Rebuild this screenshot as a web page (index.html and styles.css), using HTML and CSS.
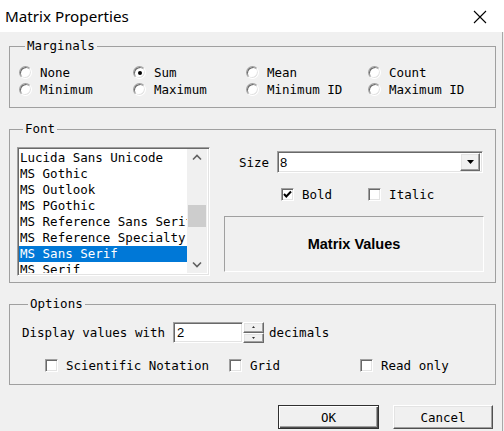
FILE: index.html
```html
<!DOCTYPE html>
<html>
<head>
<meta charset="utf-8">
<link rel="stylesheet" href="styles.css">
</head>
<body>
<div class="window">
  <div class="titlebar">
    <span class="title">Matrix Properties</span>
    <svg class="close" width="14" height="14" viewBox="0 0 14 14"><path d="M1 1L13 13M13 1L1 13" stroke="#000" stroke-width="1.1" fill="none"/></svg>
  </div>
  <div class="client">
    <fieldset class="group marginals">
      <legend>Marginals</legend>
      <div class="radio-grid">
        <div class="opt"><span class="radio"></span>None</div>
        <div class="opt"><span class="radio on"></span>Sum</div>
        <div class="opt"><span class="radio"></span>Mean</div>
        <div class="opt"><span class="radio"></span>Count</div>
        <div class="opt"><span class="radio"></span>Minimum</div>
        <div class="opt"><span class="radio"></span>Maximum</div>
        <div class="opt"><span class="radio"></span>Minimum ID</div>
        <div class="opt"><span class="radio"></span>Maximum ID</div>
      </div>
    </fieldset>

    <fieldset class="group font">
      <legend>Font</legend>
      <div class="font-body">
        <div class="listbox sunken">
          <div class="items">
            <div class="item">Lucida Sans Unicode</div>
            <div class="item">MS Gothic</div>
            <div class="item">MS Outlook</div>
            <div class="item">MS PGothic</div>
            <div class="item">MS Reference Sans Serif</div>
            <div class="item">MS Reference Specialty</div>
            <div class="item sel">MS Sans Serif</div>
            <div class="item">MS Serif</div>
          </div>
          <div class="scrollbar">
            <svg class="chev" width="20" height="17" viewBox="0 0 20 17"><path d="M6 10.5L10 6.5L14 10.5" stroke="#606060" stroke-width="1.6" fill="none"/></svg>
            <div class="track"><div class="thumb"></div></div>
            <svg class="chev" width="20" height="17" viewBox="0 0 20 17"><path d="M6 6.5L10 10.5L14 6.5" stroke="#606060" stroke-width="1.6" fill="none"/></svg>
          </div>
        </div>
        <div class="font-side">
          <div class="size-row">
            <span class="lbl">Size</span>
            <div class="combo sunken">
              <span class="val">8</span>
              <span class="dropbtn raised"><svg width="7" height="4" viewBox="0 0 7 4"><path d="M0 0H7L3.5 4Z" fill="#000"/></svg></span>
            </div>
          </div>
          <div class="style-row">
            <div class="chk-item"><span class="check sunken"><svg width="11" height="11" viewBox="0 0 11 11"><path d="M2 5L4.3 7.5L9 2.5" stroke="#000" stroke-width="2" fill="none"/></svg></span>Bold</div>
            <div class="chk-item italic-item"><span class="check sunken"></span>Italic</div>
          </div>
          <div class="preview">Matrix Values</div>
        </div>
      </div>
    </fieldset>

    <fieldset class="group options">
      <legend>Options</legend>
      <div class="dec-row">
        <span>Display values with</span>
        <div class="spin">
          <div class="edit sunken">2</div>
          <div class="spinbtns">
            <span class="sbtn raised"><svg width="3" height="2" viewBox="0 0 3 2"><path d="M0 2H3L1.5 0Z" fill="#303030"/></svg></span>
            <span class="sbtn raised"><svg width="3" height="2" viewBox="0 0 3 2"><path d="M0 0H3L1.5 2Z" fill="#303030"/></svg></span>
          </div>
        </div>
        <span>decimals</span>
      </div>
      <div class="opt-row">
        <div class="chk-item"><span class="check sunken"></span>Scientific Notation</div>
        <div class="chk-item"><span class="check sunken"></span>Grid</div>
        <div class="chk-item"><span class="check sunken"></span>Read only</div>
      </div>
    </fieldset>

    <div class="buttons">
      <div class="btn default">OK</div>
      <div class="btn">Cancel</div>
    </div>
  </div>
</div>
</body>
</html>
```
FILE: styles.css
```css
* { box-sizing: border-box; }
html, body { margin: 0; padding: 0; }
body {
  width: 504px;
  height: 431px;
  overflow: hidden;
  background: #f0f0f0;
  font-family: "DejaVu Sans Mono", monospace;
  font-size: 12.5px;
  color: #000;
}
.window { width: 504px; height: 431px; display: flex; flex-direction: column; }
.titlebar {
  height: 32px;
  flex: none;
  background: #fff;
  display: flex;
  align-items: center;
  justify-content: space-between;
  padding: 0 17px 1px 5px;
}
.title {
  font-family: "Noto Sans", sans-serif;
  font-size: 15.2px;
}
.close { margin-top: 2px; }
.client {
  flex: 1;
  margin-right: 1px;
  border-right: 1px solid #a8a8a8;
  padding: 6px 6px 0 9px;
  display: flex;
  flex-direction: column;
}

.group {
  margin: 0;
  border: 1px solid #a0a0a0;
  min-width: 0;
}
.group + .group { margin-top: 13px; }
.group legend {
  margin-left: 6px;
  padding: 0 2px;
  line-height: 16px;
  height: 16px;
}

.marginals { padding: 10px 4px 9px 9px; }
.radio-grid {
  display: grid;
  grid-template-columns: 114px 113px 122px 1fr;
  grid-auto-rows: 17px;
}
.opt { display: flex; align-items: center; gap: 8px; white-space: nowrap; line-height: 17px; }
.radio {
  width: 13px;
  height: 13px;
  border-radius: 50%;
  background: #fff;
  border: 1px solid;
  border-color: #a0a0a0 #fff #fff #a0a0a0;
  box-shadow: inset 1px 1px #696969, inset -1px -1px #e3e3e3;
  position: relative;
  flex: none;
}
.radio.on::after {
  content: "";
  position: absolute;
  left: 3.5px;
  top: 3.5px;
  width: 4px;
  height: 4px;
  border-radius: 50%;
  background: #000;
}

.sunken {
  border: 1px solid;
  border-color: #a0a0a0 #fff #fff #a0a0a0;
  box-shadow: inset 1px 1px #696969, inset -1px -1px #e3e3e3;
}
.raised {
  border: 1px solid;
  border-color: #fff #696969 #696969 #fff;
  box-shadow: inset -1px -1px #a0a0a0, inset 1px 1px #e3e3e3;
  background: #f0f0f0;
}

.font { padding: 10px 11px 6px 7px; }
.font-body { display: flex; gap: 14px; }
.listbox {
  width: 193px;
  height: 129px;
  background: #fff;
  padding: 1px 2px 2px 1px;
  display: flex;
  overflow: hidden;
}
.items { flex: 1; min-width: 0; overflow: hidden; padding-top: 1px; }
.item {
  height: 16px;
  line-height: 16px;
  white-space: nowrap;
  overflow: hidden;
  padding-left: 1px;
}
.item.sel { background: #0078d7; color: #fff; }
.scrollbar {
  width: 20px;
  flex: none;
  background: #f0f0f0;
  display: flex;
  flex-direction: column;
}
.chev { display: block; flex: none; }
.track { flex: 1; padding-top: 39px; }
.thumb { height: 22px; margin: 0 1px; background: #cdcdcd; }

.font-side { flex: 1; display: flex; flex-direction: column; }
.size-row {
  display: flex;
  align-items: center;
  margin-top: 4px;
  padding-left: 15px;
  padding-right: 1px;
  gap: 8px;
}
.combo {
  flex: 1;
  height: 22px;
  background: #fff;
  display: flex;
  align-items: center;
  justify-content: space-between;
  padding: 2px 2px 2px 2px;
}
.val, .edit {
  font-family: "Liberation Sans", sans-serif;
  font-size: 13px;
}
.dropbtn {
  width: 20px;
  height: 18px;
  display: flex;
  align-items: center;
  justify-content: center;
}
.dropbtn svg { display: block; }

.style-row {
  display: flex;
  align-items: center;
  margin-top: 13px;
  padding-left: 57px;
  height: 17px;
}
.chk-item { display: flex; align-items: center; gap: 8px; white-space: nowrap; line-height: 17px; }
.italic-item { margin-left: 36px; }
.check {
  width: 13px;
  height: 13px;
  background: #fff;
  flex: none;
  display: flex;
  align-items: center;
  justify-content: center;
}
.check svg { display: block; }

.preview {
  margin-top: 13px;
  height: 56px;
  border: 1px solid;
  border-color: #a0a0a0 #fff #fff #a0a0a0;
  display: flex;
  align-items: center;
  justify-content: center;
  font-family: "Liberation Sans", sans-serif;
  font-weight: bold;
  font-size: 14.5px;
  padding-bottom: 1px;
}

.options { padding: 10px 4px 10px 12px; }
.dec-row { display: flex; align-items: center; height: 21px; gap: 8px; }
.spin { display: flex; height: 21px; margin-right: -3px; }
.edit {
  width: 70px;
  height: 21px;
  background: #fff;
  padding: 1px 3px;
  line-height: 17px;
}
.spinbtns { display: flex; flex-direction: column; width: 21px; }
.sbtn {
  flex: 1;
  display: flex;
  align-items: center;
  justify-content: center;
}
.sbtn svg { display: block; }
.opt-row {
  display: grid;
  grid-template-columns: 184px 131px auto;
  margin-top: 14px;
  padding-left: 23px;
  height: 17px;
}

.buttons {
  display: flex;
  justify-content: flex-end;
  gap: 14px;
  margin-top: 20px;
  padding-right: 3px;
}
.btn {
  width: 100px;
  height: 24px;
  display: flex;
  align-items: center;
  justify-content: center;
  background: #f0f0f0;
  border: 1px solid;
  border-color: #fff #505050 #505050 #fff;
  box-shadow: inset -1px -1px #a0a0a0, inset 1px 1px #e3e3e3;
}
.btn.default {
  width: 101px;
  border: 1px solid #303030;
  box-shadow: inset 1px 1px #fff, inset -1px -1px #505050, inset -2px -2px #a0a0a0;
}
```
